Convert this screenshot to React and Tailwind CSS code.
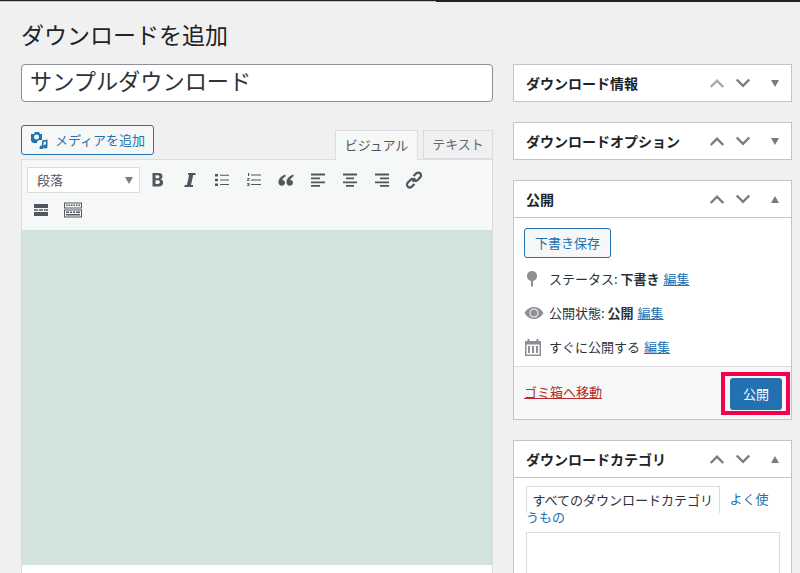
const Up = ({ light }) => (
  <svg width="16" height="16" viewBox="0 0 16 16" fill="none" stroke={light ? "#a7aaad" : "#787c82"} strokeWidth="2.4">
    <path d="M1.700 12 8 5.700l6.300 6.300" />
  </svg>
);

const Down = () => (
  <svg width="16" height="16" viewBox="0 0 16 16" fill="none" stroke="#787c82" strokeWidth="2.4">
    <path d="M1.700 4.500 8 10.800l6.300-6.300" />
  </svg>
);

const Caret = ({ open }) => (
  <svg width="8" height="7" viewBox="0 0 8 7" fill="#787c82">
    <path d={open ? "M4 0 8 7H0z" : "M0 0h8L4 7z"} />
  </svg>
);

const MetaHead = ({ title, open, light, border }) => (
  <div className={`flex items-center pl-[12px] pr-[12px] ${border ? "h-[37px] border-b border-[#c3c4c7]" : "h-[36px]"}`}>
    <h2 className="flex-1 text-[14px] font-bold text-[#1d2327]">{title}</h2>
    <div className="flex items-center gap-[10px]">
      <Up light={light} />
      <Down />
      <span className="ml-[10px] flex w-[8px]">
        <Caret open={open} />
      </span>
    </div>
  </div>
);

const ToolIcon = ({ children }) => (
  <span className="flex h-[32px] w-[32px] items-center justify-center">
    <svg width="16" height="16" viewBox="0 0 16 16" fill="#50575e">
      {children}
    </svg>
  </span>
);

const toolbar = [
  <path key="b" d="M2.500 1h6c2.600 0 4 1.200 4 3.400 0 1.500-.8 2.500-2.100 2.900 1.700.3 2.700 1.500 2.700 3.200 0 2.600-1.700 4-4.500 4H2.500zM5.500 3.200v3.100h2.300c1 0 1.600-.6 1.600-1.600s-.6-1.500-1.600-1.500zM5.500 8.300v3.600h2.500c1.200 0 1.900-.7 1.900-1.800S9.200 8.300 8 8.300z" fillRule="evenodd" />,
  <path key="i" d="M6 1h7.500v2h-2.300L9 13h2v2H2.500v-2h2.400L7.100 3H6z" />,
  <path key="ul" d="M1 2h3v2.500H1zM1 6.700h3v2.500H1zM1 11.400h3v2.500H1zM6 2.700h9v1H6zM6 7.400h9v1H6zM6 12.100h9v1H6z" />,
  <path key="ol" d="M2 1h1.200v3H2zM1 6h2.500v.8L2 8.200h1.500V9H1v-.8l1.500-1.400H1zM1 11h2.500v3H1v-.7h1.500v-.5h-1v-.6h1v-.5H1zM5 2.500h10v1H5zM5 7.500h10v1H5zM5 12h10v1H5z" />,
  <path key="q" d="M7.500 2.500C3.500 4 .5 6.500.5 10.200c0 2.100 1.300 3.500 3.200 3.500S7 12.300 7 10.700 5.800 8 4.300 8c.4-1.500 1.700-2.700 3.200-3.400zM15.500 2.500c-4 1.500-7 4-7 7.700 0 2.100 1.300 3.500 3.200 3.500s3.300-1.400 3.300-3S13.800 8 12.300 8c.4-1.500 1.700-2.700 3.200-3.400z" />,
  <path key="l" d="M1 1.500h14v2H1zM1 5.500h9v1.800H1zM1 9.500h14v1.800H1zM1 13h9v1.800H1z" />,
  <path key="c" d="M1 1.500h14v2H1zM4 5.500h8v1.800H4zM1 9.500h14v1.800H1zM4 13h8v1.800H4z" />,
  <path key="r" d="M1 1.500h14v2H1zM6 5.500h9v1.800H6zM1 9.500h14v1.800H1zM6 13h9v1.800H6z" />,
];

const App = () => {
  return (
    <div className="h-[573px] w-[800px] overflow-hidden bg-[#f0f0f1] font-['Noto_Sans_CJK_JP','Liberation_Sans',sans-serif] text-[#2c3338]">
      <div className="h-[2px] bg-[#1d2327]">
        <div className="h-[1px]" />
        <div className="h-[1px] w-[436px] bg-[#c9c9c9]" />
      </div>
      <div className="flex items-start pl-[21px]">
        <main className="w-[472px] shrink-0">
          <h1 className="mt-[16px] h-[32px] text-[23px] leading-[32px] text-[#1d2327]">ダウンロードを追加</h1>
          <div className="mt-[14px] flex h-[38px] items-center rounded-[4px] border border-[#8c8f94] bg-white px-[8px] pb-[4px] text-[22.2px] text-[#2c3338]">
            サンプルダウンロード
          </div>

          <div className="mt-[23px] flex items-end justify-between">
            <button className="mb-[4px] flex h-[30px] w-[133px] items-center rounded-[3px] border border-[#2271b1] bg-[#f6f7f7] pb-[1px] pl-[9px] text-[13px] text-[#2271b1]">
              <svg width="18" height="18" viewBox="0 0 18 18" fill="#2271b1" className="mr-[6px] mt-[1px]">
                <path d="M0 3h3l1-2h4l1 2h2v6H9a3 3 0 0 0-3 3H2L0 10zM5.500 3.500a2.500 2.500 0 1 0 0 5 2.500 2.500 0 0 0 0-5z" fillRule="evenodd" />
                <path d="M11 9.500 16.500 8.500v7a2 2 0 1 1-1.600-2v-3l-2.400.4V16.500a2 2 0 1 1-1.500-2z" />
              </svg>
              メディアを追加
            </button>
            <div className="flex items-end gap-[5px] text-[13px]">
              <div className="-mb-px flex h-[30px] w-[83px] items-center justify-center border border-b-0 border-[#dcdcde] bg-[#f6f7f7] pb-[2px] text-[#50575e]">
                ビジュアル
              </div>
              <div className="flex h-[29px] w-[70px] items-center justify-center border border-[#dcdcde] bg-[#f0f0f1] pb-[2px] text-[#646970]">
                テキスト
              </div>
            </div>
          </div>

          <div className="border-x border-t border-[#dcdcde] bg-[#f6f7f7]">
            <div className="flex h-[70px] flex-col px-[5px] pt-[4px]">
              <div className="flex items-center">
                <div className="mr-[2px] flex h-[26px] w-[113px] items-center justify-between border border-[#dcdcde] bg-white pl-[9px] pr-[6px] text-[13px] text-[#50575e]">
                  段落
                  <Caret />
                </div>
                <div className="flex">
                  {toolbar.map((icon) => (
                    <ToolIcon key={icon.key}>{icon}</ToolIcon>
                  ))}
                  <span className="flex h-[32px] w-[32px] items-center justify-center">
                    <svg width="18" height="18" viewBox="0 0 18 18" fill="none" stroke="#50575e" strokeWidth="2.200">
                      <path d="M7.500 10.500 10.500 7.500" />
                      <path d="M8.500 5 11.200 2.400a2.800 2.800 0 0 1 4 4L12.600 9a2.800 2.800 0 0 1-3.800.2" />
                      <path d="M9.500 13 6.800 15.600a2.800 2.800 0 0 1-4-4L5.400 9a2.800 2.800 0 0 1 3.800-.2" />
                    </svg>
                  </span>
                </div>
              </div>
              <div className="-ml-[2px] -mt-[2px] flex">
                <ToolIcon>
                  <path d="M1 2h14v4H1zM1 7.300h4v1.400H1zM6 7.300h4v1.400H6zM11 7.300h4v1.400h-4zM1 10h14v4H1z" />
                </ToolIcon>
                <span className="flex h-[32px] w-[32px] items-center justify-center">
                  <svg width="18" height="16" viewBox="0 0 18 16" fill="#50575e" fillRule="evenodd">
                    <path d="M0 .5h18v6H0zM1 1.500v4h16v-4zM2 2.500h1.500V4H2zM4.500 2.500H6V4H4.500zM7 2.500h1.500V4H7zM9.500 2.500H11V4H9.500zM12 2.500h1.500V4H12zM14.500 2.500H16V4h-1.500z" />
                    <path d="M0 7.500h18v8H0zM1 8.500v6h16v-6zM2 9.500h3V11H2zM6 9.500h2V11H6zM9 9.500h2V11H9zM12 9.500h4V11h-4zM2 12h14v1.500H2z" />
                  </svg>
                </span>
              </div>
            </div>
            <div className="h-[335px] bg-[#d2e3dd]" />
            <div className="h-[20px] bg-white" />
          </div>
        </main>

        <aside className="ml-[20px] mt-[62px] w-[279px] shrink-0">
          <section className="border border-[#c3c4c7] bg-white">
            <MetaHead title="ダウンロード情報" light />
          </section>
          <section className="mt-[20px] border border-[#c3c4c7] bg-white">
            <MetaHead title="ダウンロードオプション" />
          </section>
          <section className="mt-[20px] border border-[#c3c4c7] bg-white">
            <MetaHead title="公開" open border />
            <div className="px-[10px] pt-[10px]">
              <button className="flex h-[30px] w-[87px] items-center justify-center rounded-[3px] border border-[#2271b1] bg-[#f6f7f7] text-[13px] text-[#2271b1]">
                下書き保存
              </button>
            </div>
            <div className="mt-[4px] flex h-[34px] items-center pl-[13px] text-[13px]">
              <svg width="10" height="16" viewBox="0 0 10 16" fill="#8c8f94" className="mr-[12px]">
                <path d="M5 0a5 5 0 0 1 1 9.900V15l-1 1-1-1V9.900A5 5 0 0 1 5 0z" />
              </svg>
              ステータス:&nbsp;<b className="font-bold">下書き</b>&nbsp;
              <a className="ml-[1px] text-[#2271b1] underline">編集</a>
            </div>
            <div className="flex h-[34px] items-center pl-[10px] text-[13px]">
              <svg width="20" height="14" viewBox="0 0 20 14" fill="#8c8f94" fillRule="evenodd" className="mr-[5px]">
                <path d="M10 1c4 0 7.500 2.500 9.500 6-2 3.500-5.500 6-9.500 6S2.500 10.500.5 7C2.500 3.500 6 1 10 1zM10 2.500a4.500 4.500 0 1 0 0 9 4.500 4.500 0 0 0 0-9z" />
                <circle cx="10" cy="7" r="3.500" />
              </svg>
              公開状態:&nbsp;<b className="font-bold">公開</b>&nbsp;
              <a className="ml-[1px] text-[#2271b1] underline">編集</a>
            </div>
            <div className="flex h-[34px] items-center pl-[11px] text-[13px]">
              <svg width="16" height="18" viewBox="0 0 16 18" fill="#8c8f94" fillRule="evenodd" className="mr-[8px]">
                <path d="M0 3h2.500V1h2v2h7V1h2v2H16v15H0zM1.500 6.500V16.500h13V6.500z" />
                <path d="M3 8h2v7H3zM7 8h2v7H7zM11 8h2v7h-2z" />
              </svg>
              すぐに公開する&nbsp;
              <a className="ml-[1px] text-[#2271b1] underline">編集</a>
            </div>
            <div className="mt-[2px] flex h-[53px] items-center justify-between border-t border-[#dcdcde] bg-[#f6f7f7] pl-[10px] pr-[1px]">
              <a className="pb-[2px] text-[13px] text-[#b32d2e] underline">ゴミ箱へ移動</a>
              <div className="border-[4px] border-[#f5004f] pb-[1px] pl-[5px] pr-[4px] pt-[2px]">
                <button className="flex h-[32px] w-[52px] items-center justify-center rounded-[3px] bg-[#2271b1] text-[13px] text-white">
                  公開
                </button>
              </div>
            </div>
          </section>
          <section className="mt-[20px] border border-[#c3c4c7] bg-white">
            <MetaHead title="ダウンロードカテゴリ" open border />
            <div className="pl-[12px] pr-[11px] pt-[8px] text-[13px] leading-[19px]">
              <div className="flex h-[27px] items-start">
                <span className="h-[27px] border-x border-t border-[#dcdcde] px-[5.500px] pt-[3px]">すべてのダウンロードカテゴリ</span>
                <a className="ml-[10px] pt-[3px] text-[#2271b1]">よく使</a>
              </div>
              <a className="-mt-[3px] block h-[13px] leading-[13px] text-[#2271b1]">うもの</a>
              <div className="mt-[9px] h-[60px] border border-[#dcdcde]" />
            </div>
          </section>
        </aside>
      </div>
    </div>
  );
};

export default App;
